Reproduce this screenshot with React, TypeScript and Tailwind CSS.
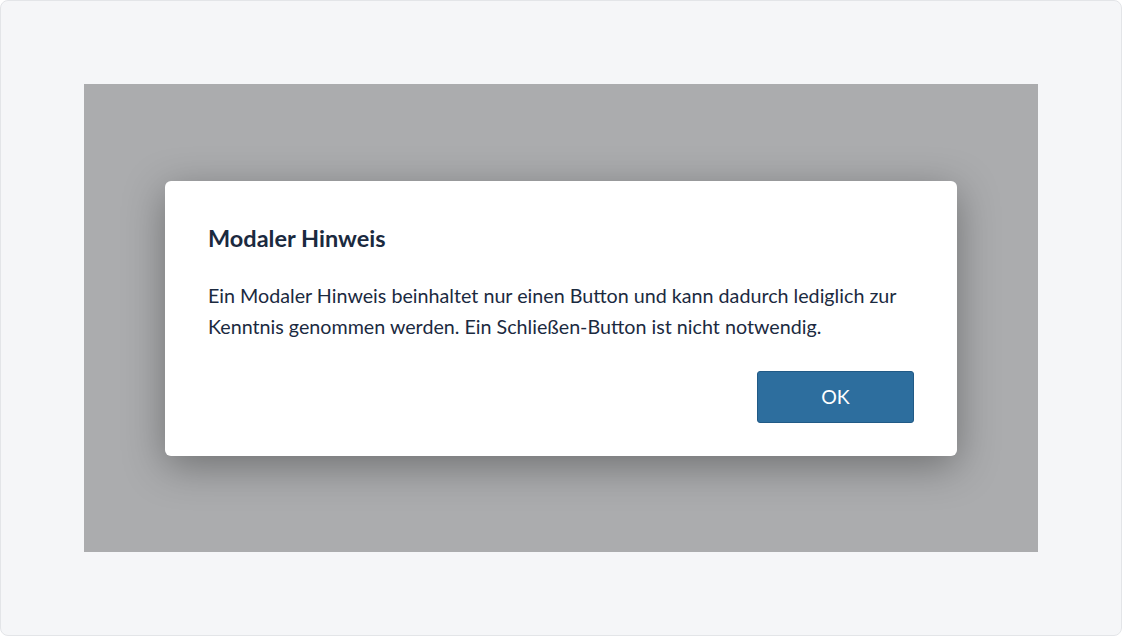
export default function App() {
  return (
    <div className="w-[1122px] h-[636px] bg-[#f5f6f8] border border-[#e3e5e8] rounded-lg p-[83px] font-['Lato',sans-serif]">
      {/* Backdrop */}
      <div className="w-full h-full bg-[#abacae] flex items-center justify-center">
        {/* Modal */}
        <div className="w-[792px] bg-white rounded-md px-[43px] pt-[42px] pb-[33px] shadow-[0_10px_40px_rgba(0,0,0,0.35)] text-[#1b2a3f]">
          <h2 className="text-[23.5px] leading-[30px] font-bold">Modaler Hinweis</h2>
          <p className="mt-[27px] text-[19.7px] leading-[31px]">
            Ein Modaler Hinweis beinhaltet nur einen Button und kann dadurch lediglich zur
            Kenntnis genommen werden. Ein Schließen-Button ist nicht notwendig.
          </p>
          <div className="flex justify-end mt-[29px]">
            <button className="w-[157px] h-[52px] rounded-[3px] bg-[#2d6e9e] border border-[#215a86] text-white text-[19.5px]">
              OK
            </button>
          </div>
        </div>
      </div>
    </div>
  );
}
